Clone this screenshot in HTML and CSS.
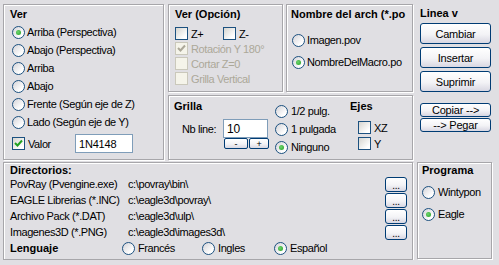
FILE: index.html
```html
<!DOCTYPE html>
<html>
<head>
  <title>Opciones</title>
  <meta http-equiv="Content-Type" content="text/html; charset=UTF-8" />
  <link rel="stylesheet" href="styles.css">
</head>
<body>
  <div class="main">
    <div class="frame ver">
      <div class="title">Ver</div>
      <label class="opt"><span class="radio on"></span>Arriba (Perspectiva)</label>
      <label class="opt"><span class="radio"></span>Abajo (Perspectiva)</label>
      <label class="opt"><span class="radio"></span>Arriba</label>
      <label class="opt"><span class="radio"></span>Abajo</label>
      <label class="opt"><span class="radio"></span>Frente (Según eje de Z)</label>
      <label class="opt"><span class="radio"></span>Lado (Según eje de Y)</label>
      <div class="valor">
        <label class="opt valor-lbl"><span class="check"><svg viewBox="0 0 11 11"><path d="M2 5 L4.5 7.5 L9 2.5" /></svg></span>Valor</label>
        <input class="field valor-field" type="text" value="1N4148">
      </div>
    </div>

    <div class="mid">
      <div class="toprow">
        <div class="frame opcion">
          <div class="title">Ver (Opción)</div>
          <div class="chk-row first">
            <label class="opt zitem"><span class="check"></span>Z+</label>
            <label class="opt"><span class="check"></span>Z-</label>
          </div>
          <label class="opt chk-row off"><span class="check"><svg viewBox="0 0 11 11"><path d="M2 5 L4.5 7.5 L9 2.5" /></svg></span>Rotación Y 180°</label>
          <label class="opt chk-row off"><span class="check"></span>Cortar Z=0</label>
          <label class="opt chk-row off"><span class="check"></span>Grilla Vertical</label>
        </div>
        <div class="frame nombre">
          <div class="title">Nombre del arch (*.po</div>
          <div class="nombre-opts">
            <label class="opt"><span class="radio"></span>Imagen.pov</label>
            <label class="opt"><span class="radio on"></span>NombreDelMacro.po</label>
          </div>
        </div>
      </div>

      <div class="frame grilla">
        <div class="g-left">
          <div class="title">Grilla</div>
          <div class="nb-row">
            <span class="nb-lbl">Nb line:</span>
            <input class="field nb-field" type="text" value="10">
          </div>
          <div class="pm">
            <button class="btn small minus">-</button>
            <button class="btn small plus">+</button>
          </div>
        </div>
        <div class="g-radios">
          <label class="opt"><span class="radio"></span>1/2 pulg.</label>
          <label class="opt"><span class="radio"></span>1 pulgada</label>
          <label class="opt"><span class="radio on"></span>Ninguno</label>
        </div>
        <div class="g-ejes">
          <div class="title">Ejes</div>
          <label class="opt eje first"><span class="check"></span>XZ</label>
          <label class="opt eje"><span class="check"></span>Y</label>
        </div>
      </div>
    </div>

    <div class="linea">
      <div class="title">Linea v</div>
      <button class="btn big first">Cambiar</button>
      <button class="btn big">Insertar</button>
      <button class="btn big">Suprimir</button>
      <button class="btn flat copiar">Copiar --&gt;</button>
      <button class="btn flat">--&gt; Pegar</button>
    </div>

    <div class="frame dirs">
      <div class="title small-title">Directorios:</div>
      <div class="dir-grid">
        <span>PovRay (Pvengine.exe)</span><span>c:\povray\bin\</span><button class="btn dots">...</button>
        <span>EAGLE Librerias (*.INC)</span><span>c:\eagle3d\povray\</span><button class="btn dots">...</button>
        <span>Archivo Pack (*.DAT)</span><span>c:\eagle3d\ulp\</span><button class="btn dots">...</button>
        <span>Imagenes3D (*.PNG)</span><span>c:\eagle3d\images3d\</span><button class="btn dots">...</button>
      </div>
      <div class="lang-row">
        <span class="lang-lbl">Lenguaje</span>
        <label class="opt fr"><span class="radio"></span>Francés</label>
        <label class="opt en"><span class="radio"></span>Ingles</label>
        <label class="opt"><span class="radio on"></span>Español</label>
      </div>
    </div>

    <div class="frame programa">
      <div class="title small-title">Programa</div>
      <div class="prog-opts">
        <label class="opt"><span class="radio"></span>Wintypon</label>
        <label class="opt"><span class="radio on"></span>Eagle</label>
      </div>
    </div>
  </div>
</body>
</html>
```

FILE: styles.css
```css
body {
  margin: 0;
  background-color: #e0dfe3;
  font-family: "Liberation Sans", Arial, sans-serif;
  font-size: 11px;
  letter-spacing: -0.4px;
  color: #000;
}
.main {
  display: grid;
  grid-template-columns: 161px 245px 75px;
  grid-template-rows: 156px 98px;
  column-gap: 4px;
  row-gap: 2px;
  padding: 4px 0 0 3px;
}
.frame {
  border: 1px solid #a7a6aa;
  box-shadow: inset 1px 1px 0 #fff, 1px 1px 0 #fff;
  box-sizing: border-box;
}
.title {
  font-weight: bold;
  line-height: 18px;
  letter-spacing: 0;
  white-space: nowrap;
}
.opt {
  display: flex;
  align-items: center;
  white-space: nowrap;
}

/* radios y casillas estilo XP */
.radio {
  width: 13px;
  height: 13px;
  box-sizing: border-box;
  border: 1px solid #1c5180;
  border-radius: 50%;
  background: linear-gradient(135deg, #d4d3d8, #ffffff 75%);
  margin-right: 2px;
  flex: none;
  position: relative;
}
.radio.on::after {
  content: "";
  position: absolute;
  left: 3px;
  top: 3px;
  width: 5px;
  height: 5px;
  border-radius: 50%;
  background: radial-gradient(circle at 40% 40%, #6fd36f, #21a121);
}
.check {
  width: 13px;
  height: 13px;
  box-sizing: border-box;
  border: 1px solid #1c5180;
  background: linear-gradient(135deg, #d6d5d0, #ffffff 80%);
  margin-right: 3px;
  flex: none;
  display: flex;
}
.check svg {
  width: 11px;
  height: 11px;
}
.check path {
  fill: none;
  stroke: #21a121;
  stroke-width: 2;
}
.off {
  color: #aca899;
}
.off .check {
  border-color: #cac8bb;
  background: #f5f4ea;
}
.off .check path {
  stroke: #aca899;
}

.field {
  box-sizing: border-box;
  height: 19px;
  border: 1px solid #7f9db9;
  background-color: #fff;
  font-family: "Liberation Sans", Arial, sans-serif;
  font-size: 11px;
  letter-spacing: -0.2px;
  padding: 0 3px;
  margin: 0;
}
.btn {
  font-family: "Liberation Sans", Arial, sans-serif;
  font-size: 11px;
  letter-spacing: -0.2px;
  color: #000;
  padding: 0;
  margin: 0;
  border: 1px solid #003c74;
  border-radius: 3px;
  background: linear-gradient(#ffffff, #f3f3f6 55%, #d8d7e2);
  box-sizing: border-box;
}

/* Ver */
.ver {
  padding-left: 6px;
}
.ver .opt {
  height: 18px;
  margin-left: 2px;
}
.valor {
  display: flex;
  align-items: center;
  margin: 3px 0 0 2px;
}
.ver .valor-lbl {
  width: 63px;
  margin-left: 0;
}
.valor-field {
  width: 58px;
}

/* columna del medio */
.mid {
  display: flex;
  flex-direction: column;
  gap: 3px;
}
.toprow {
  display: flex;
  gap: 3px;
  height: 88px;
}
.opcion {
  width: 115px;
  padding-left: 6px;
}
.chk-row {
  height: 15px;
  display: flex;
  align-items: center;
}
.chk-row.first {
  margin-top: 3px;
}
.zitem {
  width: 48px;
}
.nombre {
  flex: 1;
  padding-left: 4px;
  overflow: hidden;
}
.nombre-opts {
  margin-top: 6px;
  padding-left: 1px;
}
.nombre-opts .opt {
  height: 22px;
}

.grilla {
  flex: 1;
  display: flex;
  padding-left: 5px;
}
.grilla .title {
  line-height: 20px;
}
.g-left {
  width: 101px;
}
.nb-row {
  display: flex;
  align-items: center;
  margin-top: 3px;
}
.nb-lbl {
  width: 41px;
  padding-left: 8px;
}
.nb-field {
  width: 45px;
  font-size: 12px;
}
.pm {
  display: flex;
  gap: 1px;
  margin-left: 50px;
}
.btn.small {
  height: 11px;
  font-size: 9px;
  line-height: 8px;
  border-radius: 2px;
}
.minus {
  width: 24px;
}
.plus {
  width: 20px;
}
.g-radios {
  width: 75px;
  padding-top: 6px;
}
.g-radios .opt {
  height: 18px;
}
.g-radios .radio {
  margin-right: 3px;
}
.eje {
  height: 13px;
  margin: 3px 0 0 8px;
}
.eje.first {
  margin-top: 5px;
}

/* Linea v */
.linea {
  padding-left: 3px;
  display: flex;
  flex-direction: column;
}
.btn.big {
  width: 71px;
  height: 21px;
  margin-top: 3px;
}
.btn.big.first {
  margin-top: 1px;
}
.btn.flat {
  width: 71px;
  height: 14px;
  line-height: 12px;
  margin-top: 1px;
}
.btn.copiar {
  margin-top: 11px;
}

/* Directorios */
.dirs {
  grid-column: 1 / 3;
  padding: 2px 4px 0 6px;
}
.small-title {
  line-height: 11px;
}
.dir-grid {
  display: grid;
  grid-template-columns: 118px 257px 22px;
  grid-auto-rows: 16px;
  align-items: center;
  white-space: nowrap;
}
.btn.dots {
  height: 15px;
  line-height: 16px;
  font-size: 10px;
}
.lang-row {
  display: flex;
  align-items: center;
  height: 16px;
}
.lang-lbl {
  font-weight: bold;
  letter-spacing: 0;
  width: 112px;
}
.fr {
  width: 80px;
}
.en {
  width: 72px;
}
.lang-row .radio {
  margin-right: 3px;
}

/* Programa */
.programa {
  height: 97px;
  padding: 2px 0 0 4px;
}
.prog-opts {
  margin-top: 5px;
}
.prog-opts .opt {
  height: 22px;
}
.prog-opts .radio {
  margin-right: 3px;
}
```
